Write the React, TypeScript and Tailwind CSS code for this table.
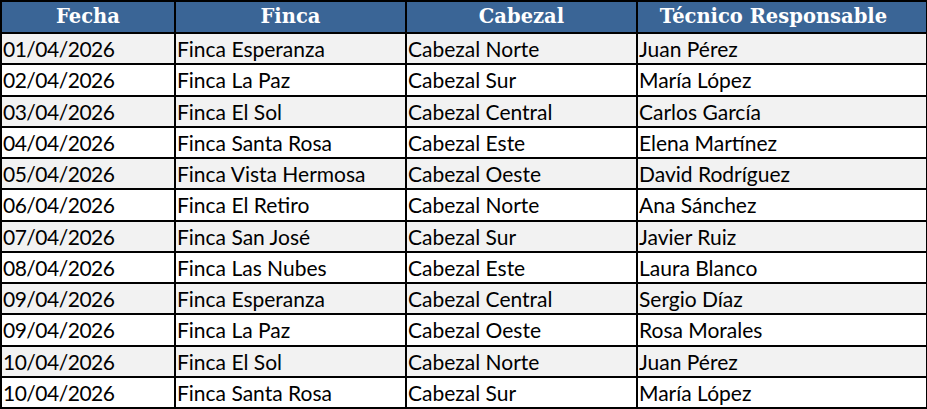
import React from "react";

const rows = [
  ["01/04/2026", "Finca Esperanza", "Cabezal Norte", "Juan Pérez"],
  ["02/04/2026", "Finca La Paz", "Cabezal Sur", "María López"],
  ["03/04/2026", "Finca El Sol", "Cabezal Central", "Carlos García"],
  ["04/04/2026", "Finca Santa Rosa", "Cabezal Este", "Elena Martínez"],
  ["05/04/2026", "Finca Vista Hermosa", "Cabezal Oeste", "David Rodríguez"],
  ["06/04/2026", "Finca El Retiro", "Cabezal Norte", "Ana Sánchez"],
  ["07/04/2026", "Finca San José", "Cabezal Sur", "Javier Ruiz"],
  ["08/04/2026", "Finca Las Nubes", "Cabezal Este", "Laura Blanco"],
  ["09/04/2026", "Finca Esperanza", "Cabezal Central", "Sergio Díaz"],
  ["09/04/2026", "Finca La Paz", "Cabezal Oeste", "Rosa Morales"],
  ["10/04/2026", "Finca El Sol", "Cabezal Norte", "Juan Pérez"],
  ["10/04/2026", "Finca Santa Rosa", "Cabezal Sur", "María López"],
];

const headers = ["Fecha", "Finca", "Cabezal", "Técnico Responsable"];

export default function App() {
  return (
    <div className="w-[927px] h-[409px] bg-white overflow-hidden">
      <table className="w-[926px] table-fixed border-collapse">
        <colgroup>
          <col className="w-[174px]" />
          <col className="w-[231px]" />
          <col className="w-[231px]" />
          <col className="w-[290px]" />
        </colgroup>
        <thead>
          <tr className="h-[32px] bg-[#3a6596]">
            {headers.map((h, j) => (
              <th
                key={h}
                className={`border-2 border-black py-0 pl-0 text-center text-white font-bold text-[19.5px] leading-none font-['DejaVu_Serif',serif] ${j === 3 ? "pr-[17px]" : "pr-0"}`}
              >
                {h}
              </th>
            ))}
          </tr>
        </thead>
        <tbody>
          {rows.map((r, i) => (
            <tr
              key={i}
              className={`h-[31.25px] ${i % 2 === 0 ? "bg-[#f2f2f2]" : "bg-white"}`}
            >
              {r.map((c, j) => (
                <td
                  key={j}
                  className={`border-2 border-black pl-[1px] pr-0 py-0 text-[21px] leading-none text-black font-['Lato',sans-serif] whitespace-nowrap overflow-hidden ${j === 0 ? "tracking-[-0.5px]" : ""}`}
                >
                  {c}
                </td>
              ))}
            </tr>
          ))}
        </tbody>
      </table>
    </div>
  );
}
